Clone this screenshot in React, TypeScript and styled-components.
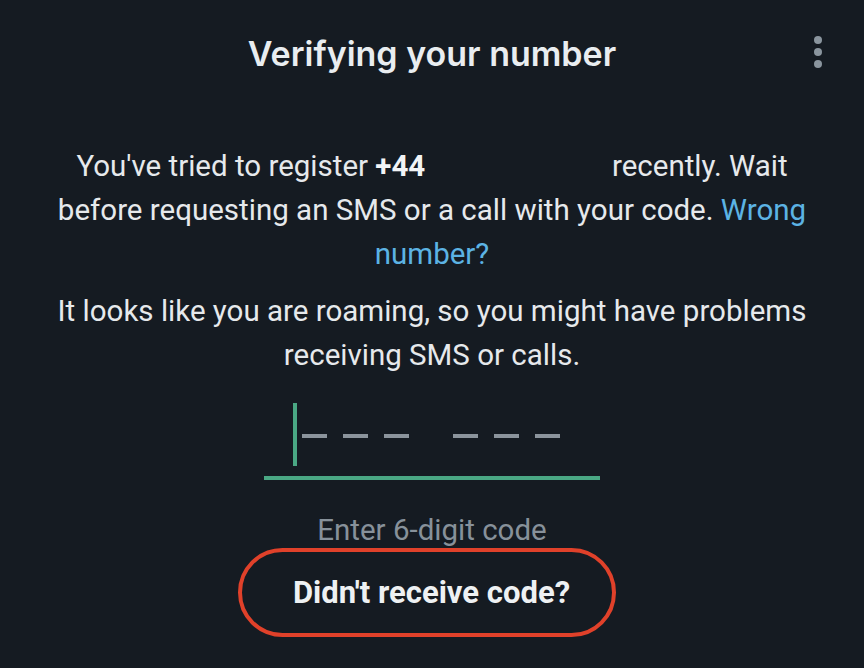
import React from "react";
import styled, { createGlobalStyle } from "styled-components";

const Global = createGlobalStyle`
  html, body { margin: 0; padding: 0; background: #151b22; }
  body { font-family: Roboto, "Noto Sans", sans-serif; }
`;

const Screen = styled.div`
  width: 864px;
  height: 668px;
  background: #151b22;
  display: flex;
  flex-direction: column;
  align-items: center;
  overflow: hidden;
`;

const Header = styled.header`
  position: relative;
  width: 100%;
  height: 106px;
  display: flex;
  align-items: center;
  justify-content: center;
`;

const Title = styled.h1`
  margin: 0;
  font-family: Inter, "Open Sans", sans-serif;
  font-weight: 600;
  font-size: 34px;
  color: #e9edf0;
`;

const MenuButton = styled.button`
  position: absolute;
  right: 30px;
  top: 31px;
  width: 32px;
  height: 42px;
  border: none;
  background: transparent;
  padding: 0;
  display: flex;
  flex-direction: column;
  align-items: center;
  justify-content: center;
  gap: 4px;
`;

const Dot = styled.span`
  width: 8px;
  height: 8px;
  border-radius: 50%;
  background: #8a959e;
`;

const Body = styled.div`
  width: 780px;
  margin-top: 38px;
  display: flex;
  flex-direction: column;
  align-items: center;
`;

const Paragraph = styled.p<{ $gap?: number }>`
  margin: 0 0 ${(p) => p.$gap ?? 0}px;
  text-align: center;
  font-size: 29.5px;
  line-height: 44px;
  color: #e6e9ec;
`;

const Strong = styled.b`
  font-weight: 700;
  color: #f2f4f6;
`;

const Redacted = styled.span`
  display: inline-block;
  width: 172px;
`;

const Link = styled.a`
  color: #5cb3e4;
  text-decoration: none;
`;

const CodeField = styled.div`
  margin-top: 26px;
  width: 336px;
  display: flex;
  flex-direction: column;
  align-items: stretch;
`;

const CodeRow = styled.div`
  height: 73px;
  display: flex;
  align-items: flex-start;
  padding-left: 29px;
`;

const Caret = styled.span`
  width: 4px;
  height: 63px;
  background: #4aa884;
  margin-right: 5px;
`;

const Group = styled.div`
  display: flex;
  gap: 16px;
  margin-top: 31px;
  & + & {
    margin-left: 44px;
  }
`;

const Dash = styled.span`
  width: 25px;
  height: 4px;
  background: #8b949c;
`;

const Underline = styled.div`
  height: 4px;
  background: #4aa884;
`;

const Hint = styled.div`
  margin-top: 34px;
  font-size: 29.5px;
  line-height: 32px;
  color: #87919a;
`;

const ResendButton = styled.button`
  margin-top: 2px;
  margin-left: -10px;
  width: 378px;
  height: 89px;
  padding: 0 0 0 9px;
  border: 4px solid #e0412a;
  border-radius: 45px;
  background: transparent;
  font-family: Roboto, sans-serif;
  font-weight: 700;
  font-size: 31px;
  color: #eef1f3;
  display: flex;
  align-items: center;
  justify-content: center;
`;

export default function App() {
  return (
    <>
      <Global />
      <Screen>
        <Header>
          <Title>Verifying your number</Title>
          <MenuButton aria-label="More options">
            <Dot />
            <Dot />
            <Dot />
          </MenuButton>
        </Header>
        <Body>
          <Paragraph $gap={13}>
            You've tried to register <Strong>+44</Strong> <Redacted /> recently. Wait before
            requesting an SMS or a call with your code. <Link>Wrong number?</Link>
          </Paragraph>
          <Paragraph>
            It looks like you are roaming, so you might have problems receiving SMS or calls.
          </Paragraph>
          <CodeField>
            <CodeRow>
              <Caret />
              <Group>
                <Dash />
                <Dash />
                <Dash />
              </Group>
              <Group>
                <Dash />
                <Dash />
                <Dash />
              </Group>
            </CodeRow>
            <Underline />
          </CodeField>
          <Hint>Enter 6-digit code</Hint>
          <ResendButton>Didn't receive code?</ResendButton>
        </Body>
      </Screen>
    </>
  );
}
